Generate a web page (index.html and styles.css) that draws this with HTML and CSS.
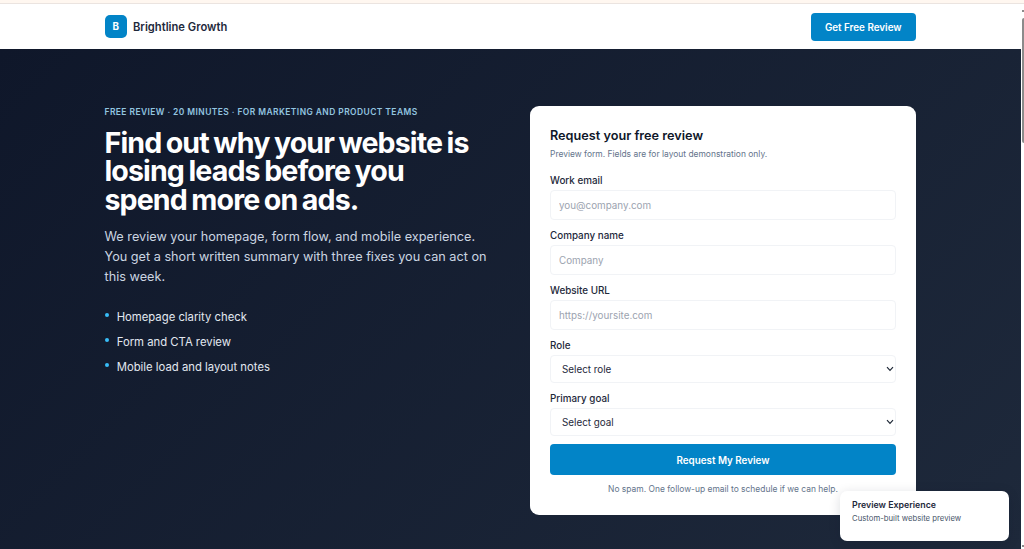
FILE: index.html
```html
<!DOCTYPE html>
<html lang="en">
<head>
<meta charset="utf-8">
<title>Brightline Growth</title>
<link rel="stylesheet" href="styles.css">
</head>
<body>
<div class="page">
  <div class="strip"></div>
  <header class="header">
    <div class="container header-row">
      <div class="brand"><span class="logo">B</span><span class="brand-name">Brightline Growth</span></div>
      <a class="header-cta">Get Free Review</a>
    </div>
  </header>
  <main class="hero">
    <div class="container hero-grid">
      <section class="intro">
        <p class="eyebrow">FREE REVIEW · 20 MINUTES · FOR MARKETING AND PRODUCT TEAMS</p>
        <h1 class="headline">Find out why your website is<br>losing leads before you<br>spend more on ads.</h1>
        <p class="lead">We review your homepage, form flow, and mobile experience.<br>You get a short written summary with three fixes you can act on<br>this week.</p>
        <ul class="points">
          <li>Homepage clarity check</li>
          <li>Form and CTA review</li>
          <li>Mobile load and layout notes</li>
        </ul>
      </section>
      <section class="card">
        <h2 class="card-title">Request your free review</h2>
        <p class="card-sub">Preview form. Fields are for layout demonstration only.</p>
        <label class="field"><span class="label">Work email</span><input class="control" placeholder="you@company.com"></label>
        <label class="field"><span class="label">Company name</span><input class="control" placeholder="Company"></label>
        <label class="field"><span class="label">Website URL</span><input class="control" placeholder="https://yoursite.com"></label>
        <div class="field role"><span class="label">Role</span><div class="control select"><span>Select role</span><svg class="chevron" viewBox="0 0 8 6"><path d="M1 1.2 4 4.3 7 1.2"/></svg></div></div>
        <div class="field"><span class="label">Primary goal</span><div class="control select"><span>Select goal</span><svg class="chevron" viewBox="0 0 8 6"><path d="M1 1.2 4 4.3 7 1.2"/></svg></div></div>
        <button class="submit">Request My Review</button>
        <p class="note">No spam. One follow-up email to schedule if we can help.</p>
      </section>
    </div>
  </main>
</div>
<aside class="toast"><strong>Preview Experience</strong><span>Custom-built website preview</span></aside>
<div class="scrollbar"><i class="arrow-up"></i><i class="thumb"></i><i class="arrow-down"></i></div>
</body>
</html>
```
FILE: styles.css
```css
* { box-sizing: border-box; }
body { margin: 0; height: 549px; overflow: hidden; position: relative; background: #fff; font-family: Inter, "Liberation Sans", sans-serif; color: #1e293b; }
p, h1, h2, ul { margin: 0; padding: 0; }
.page { width: 1024px; height: 549px; display: flex; flex-direction: column; }
.strip { height: 4px; background: #fff7f0; border-bottom: 1px solid #ebe4e0; }
.header { height: 45px; background: #fff; }
.container { width: 811.5px; margin-left: 104.5px; }
.header-row { height: 45px; display: flex; align-items: center; justify-content: space-between; }
.brand { display: flex; align-items: center; gap: 6px; }
.logo { width: 22.5px; height: 23px; border-radius: 5px; background: #0284c7; color: #fff; font-size: 9.8px; font-weight: 700; display: grid; place-items: center; }
.brand-name { font-size: 11.2px; font-weight: 600; }
.header-cta { width: 105.5px; height: 28px; border-radius: 4px; background: #0284c7; color: #fff; font-size: 9.85px; font-weight: 600; display: grid; place-items: center; }
.hero { width: 1020.5px; flex: 1; padding-top: 56.5px; background: linear-gradient(135deg, #0f172a 0%, #1e293b 100%); }
.hero-grid { display: grid; grid-template-columns: 385.5px 386px; gap: 40px; align-items: start; }
.eyebrow { font-size: 8.45px; line-height: 12px; font-weight: 600; letter-spacing: .43px; color: #93c5e0; white-space: nowrap; }
.headline { margin-top: 11.5px; font-size: 28.6px; line-height: 28.3px; font-weight: 660; letter-spacing: -.9px; word-spacing: -1.4px; color: #fff; white-space: nowrap; }
.lead { margin-top: 13.5px; font-size: 12.7px; line-height: 19.8px; color: #cbd5e1; white-space: nowrap; }
.points { list-style: none; margin-top: 21px; display: grid; gap: 7.3px; }
.points li { display: flex; align-items: flex-start; gap: 8px; font-size: 11.3px; line-height: 18px; color: #e2e8f0; }
.points li::before { content: ""; width: 4.2px; height: 4.2px; margin-top: 4.8px; border-radius: 50%; background: #38bdf8; }
.card { height: 409.5px; padding: 22.5px 20px 0; border-radius: 9px; background: #fff; }
.card-title { font-size: 12.7px; line-height: 16px; font-weight: 600; color: #0f172a; }
.card-sub { margin-top: 3.5px; margin-bottom: 14.5px; font-size: 8.45px; line-height: 12px; color: #64748b; }
.field { display: block; margin-bottom: 9px; }
.role { margin-bottom: 8.5px; }
.label { display: block; margin-bottom: 3px; font-size: 9.85px; line-height: 13px; font-weight: 500; }
.control { display: block; width: 346px; height: 30px; padding: 0 8px; border: 1px solid #f1f3f6; border-radius: 4px; background: #fff; font: 9.85px Inter, sans-serif; color: #1e293b; outline: 0; }
.control::placeholder { color: #9ca3af; opacity: 1; }
.select { height: 28px; display: flex; align-items: center; justify-content: space-between; padding: 0 1px 0 11px; }
.chevron { width: 8px; height: 6px; fill: none; stroke: #1f2937; stroke-width: 1.2; }
.submit { display: block; width: 346px; height: 31px; padding: 0; margin-top: -.2px; border: 0; border-radius: 4px; background: #0284c7; color: #fff; font: 600 9.85px Inter, sans-serif; }
.note { margin-top: 8px; text-align: center; font-size: 8.45px; line-height: 12px; color: #64748b; }
.toast { position: absolute; left: 840px; top: 491px; width: 169px; height: 50px; padding: 8px 12px; border-radius: 7px; background: #fff; box-shadow: 0 2px 12px rgba(15, 23, 42, .14); display: flex; flex-direction: column; gap: 1px; font-size: 7.75px; line-height: 12px; color: #475569; }
.toast strong { font-size: 8.8px; font-weight: 600; color: #1e293b; }
.scrollbar { position: absolute; right: 0; top: 0; width: 2px; height: 549px; }
.scrollbar i { position: absolute; left: 0; width: 2px; background: #8b8b8b; }
.arrow-up { top: 10px; height: 2px; }
.thumb { top: 18px; height: 125px; border-radius: 2px 0 0 2px; }
.arrow-down { top: 545px; height: 2px; }
```
